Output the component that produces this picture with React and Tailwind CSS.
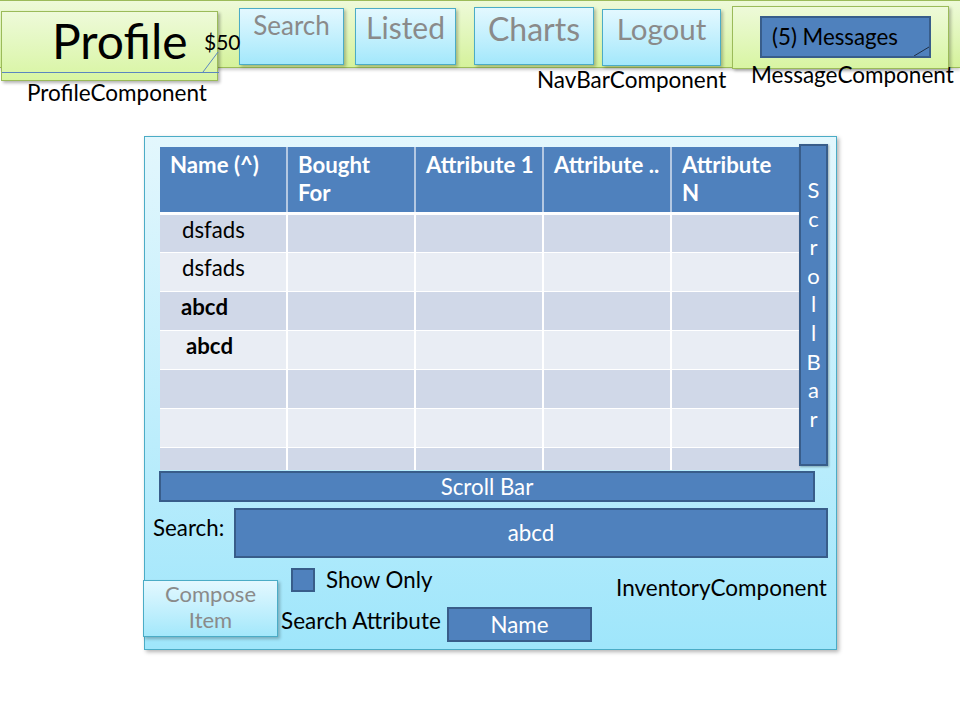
import React from "react";

const cyanBtn =
  "border border-[#4bacc6] bg-linear-to-b from-[#e3f8ff] to-[#a3e8fb] shadow-[2px_2px_3px_rgba(0,0,0,0.25)] text-[#8a8a8a] flex";
const blueBox = "bg-[#4f81bd] border-2 border-[#385d8a]";

function Header() {
  return (
    <div className="h-[68px] border-t border-b border-[#9bbb59] bg-linear-to-b from-[#eefad9] to-[#d5f29b] shadow-[0_2px_3px_rgba(0,0,0,0.2)] flex items-start">
      <div className="relative ml-[1px] mt-[10px] w-[217px] h-[70px] shrink-0 border border-[#9bbb59] bg-linear-to-b from-[#eefad9] to-[#d8f5a2] shadow-[2px_2px_3px_rgba(0,0,0,0.3)]">
        <div className="pl-[50px] text-[48px] leading-[58px] text-black">Profile</div>
        <svg className="absolute left-0 top-0" width="217" height="70">
          <line x1="0" y1="60.5" x2="217" y2="60.5" stroke="#5b86c0" strokeWidth="1" />
          <line x1="201" y1="60" x2="216" y2="40" stroke="#5b86c0" strokeWidth="1" />
        </svg>
        <div className="absolute left-[202px] top-[17px] text-[21px] leading-[26px] text-black">$50</div>
      </div>
      <div className={`${cyanBtn} justify-center ml-[21px] mt-[7px] w-[105px] h-[57px] shrink-0`}>
        <span className="text-[26px] leading-[32px]">Search</span>
      </div>
      <div className={`${cyanBtn} justify-center ml-[11px] mt-[7px] w-[101px] h-[57px] shrink-0`}>
        <span className="text-[30px] leading-[36px]">Listed</span>
      </div>
      <div className={`${cyanBtn} justify-center ml-[18px] mt-[6px] w-[120px] h-[58px] shrink-0`}>
        <span className="text-[32px] leading-[42px]">Charts</span>
      </div>
      <div className={`${cyanBtn} justify-center ml-[8px] mt-[8px] w-[119px] h-[57px] shrink-0`}>
        <span className="text-[29.5px] leading-[38px]">Logout</span>
      </div>
      <div className="ml-[11px] mt-[5px] w-[217px] h-[63px] shrink-0 border border-[#9bbb59] bg-linear-to-b from-[#eefad9] to-[#d8f5a2] shadow-[2px_2px_3px_rgba(0,0,0,0.25)]">
        <div className={`${blueBox} relative ml-[27px] mt-[9px] w-[171px] h-[42px] pl-[10px]`}>
          <span className="text-[22.3px] leading-[38px] text-black whitespace-nowrap">(5) Messages</span>
          <svg className="absolute right-0 bottom-0" width="16" height="10">
            <line x1="1" y1="10" x2="16" y2="1" stroke="#1f2f45" strokeWidth="1" />
          </svg>
        </div>
      </div>
    </div>
  );
}

function Labels() {
  return (
    <div className="flex items-start h-[36px] text-[22.5px] leading-[24px] text-black whitespace-nowrap">
      <div className="ml-[27px] mt-[13px] w-[510px] shrink-0">ProfileComponent</div>
      <div className="mt-[0px] w-[214px] shrink-0">NavBarComponent</div>
      <div className="mt-[-5px] shrink-0 relative">MessageComponent</div>
    </div>
  );
}

const headers = [["Name (^)"], ["Bought", "For"], ["Attribute 1"], ["Attribute .."], ["Attribute", "N"]];
const rows = [
  { t: "dsfads", b: false, pl: "pl-[22px]" },
  { t: "dsfads", b: false, pl: "pl-[22px]" },
  { t: "abcd", b: true, pl: "pl-[21px]" },
  { t: "abcd", b: true, pl: "pl-[26px]" },
  { t: "", b: false, pl: "pl-[22px]" },
  { t: "", b: false, pl: "pl-[22px]" },
  { t: "", b: false, pl: "pl-[22px]" },
];

function Table() {
  return (
    <div className="ml-[15px] mt-[10px] w-[640px] h-[323px] overflow-hidden shrink-0">
      <div className="grid grid-cols-5 h-[65px] bg-[#4f81bd] border-b-[3px] border-white box-content">
        {headers.map((h, i) => (
          <div
            key={i}
            className={`pl-[10px] pt-[4px] text-white font-bold text-[22.2px] leading-[28px] whitespace-nowrap ${i < 4 ? "border-r-2 border-[#b4c8e2]" : ""}`}
          >
            {h.map((l, j) => (
              <div key={j}>{l}</div>
            ))}
          </div>
        ))}
      </div>
      {rows.map((r, i) => (
        <div
          key={i}
          className={`grid grid-cols-5 border-b border-white ${i === 0 ? "h-[38px]" : "h-[39px]"} ${i % 2 === 0 ? "bg-[#d0d8e8]" : "bg-[#e9edf4]"}`}
        >
          {[0, 1, 2, 3, 4].map((c) => (
            <div
              key={c}
              className={`${c < 4 ? "border-r-2 border-white" : ""} ${c === 0 ? r.pl : ""} pt-[1px] text-[22.2px] leading-[28px] text-black ${r.b ? "font-bold" : ""}`}
            >
              {c === 0 ? r.t : ""}
            </div>
          ))}
        </div>
      ))}
    </div>
  );
}

function VScroll() {
  const letters = ["S", "c", "r", "o", "l", "l", "B", "a", "r"];
  return (
    <div className={`${blueBox} ml-[-1px] mt-[7px] w-[29px] h-[322px] shrink-0 flex flex-col items-center pt-[30px] shadow-[1px_1px_2px_rgba(0,0,0,0.3)]`}>
      {letters.map((l, i) => (
        <div key={i} className="text-white text-[22px] leading-[28.6px] h-[28.6px]">
          {l}
        </div>
      ))}
    </div>
  );
}

function Inventory() {
  return (
    <div className="ml-[144px] mt-[32px] w-[693px] h-[514px] border border-[#4bacc6] bg-linear-to-b from-[#e3f7fd] to-[#9fe6fb] shadow-[2px_2px_4px_rgba(0,0,0,0.3)] text-black">
      <div className="flex items-start">
        <Table />
        <VScroll />
      </div>
      <div className={`${blueBox} ml-[14px] mt-[1px] w-[656px] h-[31px] flex items-center justify-center text-white text-[22.3px] leading-[26px]`}>
        Scroll Bar
      </div>
      <div className="flex items-start mt-[6px]">
        <div className="ml-[8px] mt-[8px] w-[81px] shrink-0 text-[22.3px] leading-[24px]">Search:</div>
        <div className={`${blueBox} w-[594px] h-[50px] flex items-center justify-center text-white text-[22.3px]`}>abcd</div>
      </div>
      <div className="flex items-start">
        <div className={`${cyanBtn} ml-[-2px] mt-[22px] w-[135px] h-[57px] shrink-0 flex-col items-center justify-start pt-0 text-[22px] leading-[26px] relative`}>
          <div>Compose</div>
          <div>Item</div>
        </div>
        <div className="ml-[3px] w-[311px] shrink-0">
          <div className="flex items-center mt-[10px]">
            <div className={`${blueBox} ml-[10px] w-[24px] h-[24px]`} />
            <div className="ml-[11px] text-[22.3px] leading-[24px] whitespace-nowrap">Show Only</div>
          </div>
          <div className="flex items-start mt-[15px]">
            <div className="w-[166px] shrink-0 mt-[2px] text-[22.5px] leading-[24px] whitespace-nowrap">Search Attribute</div>
            <div className={`${blueBox} w-[145px] h-[35px] flex items-center justify-center text-white text-[22.3px]`}>Name</div>
          </div>
        </div>
        <div className="ml-[24px] mt-[18px] text-[22.5px] leading-[24px] whitespace-nowrap">InventoryComponent</div>
      </div>
    </div>
  );
}

export default function App() {
  return (
    <div className="w-[960px] h-[720px] bg-white overflow-hidden font-['Lato',sans-serif]">
      <Header />
      <Labels />
      <Inventory />
    </div>
  );
}
